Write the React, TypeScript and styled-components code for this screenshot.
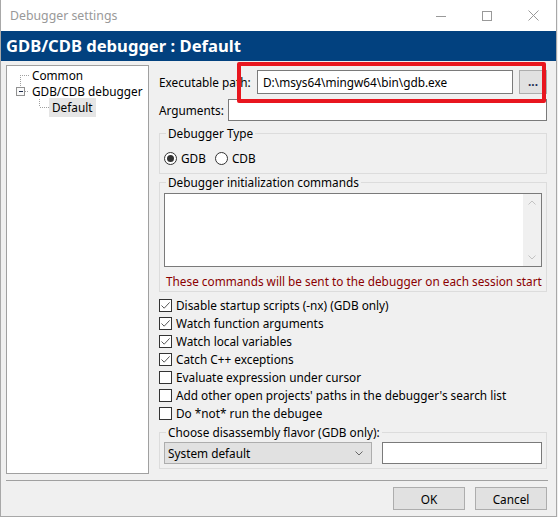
import React from "react";
import styled, { createGlobalStyle } from "styled-components";

const GlobalStyle = createGlobalStyle`
  html, body { margin: 0; padding: 0; background: #f0f0f0; }
  body {
    font-family: "Noto Sans", "Segoe UI", sans-serif;
    font-size: 11.8px;
    color: #000;
  }
  * { box-sizing: border-box; }
`;

const Window = styled.div`
  width: 557px;
  height: 517px;
  display: flex;
  flex-direction: column;
  background: #f0f0f0;
  border-left: 1px solid #a8a8a8;
  border-right: 1px solid #a8a8a8;
  border-bottom: 1px solid #a8a8a8;
  overflow: hidden;
`;

const TitleBar = styled.div`
  height: 31px;
  flex-shrink: 0;
  display: flex;
  align-items: center;
  background: #fff;
  padding-left: 9px;
`;

const TitleText = styled.div`
  flex: 1;
  font-size: 12.3px;
  color: #999;
`;

const CaptionButton = styled.div`
  width: 46px;
  height: 31px;
  display: flex;
  align-items: center;
  justify-content: center;
`;

const Banner = styled.div`
  height: 30px;
  flex-shrink: 0;
  background: #02417f;
  color: #fff;
  font-weight: 700;
  font-size: 16.6px;
  line-height: 30px;
  padding-left: 5px;
  white-space: nowrap;
`;

const Body = styled.div`
  display: flex;
  gap: 10px;
  padding: 4px 9px 0 5px;
`;

const TreePanel = styled.div`
  width: 143px;
  height: 409px;
  flex-shrink: 0;
  background: #fff;
  border: 1px solid #a0a0a0;
  padding-top: 1px;
`;

const TreeRow = styled.div`
  height: 16px;
  display: flex;
  align-items: center;
`;

const TreeGutter = styled.svg`
  flex-shrink: 0;
  display: block;
`;

const TreeLabel = styled.span<{ $selected?: boolean }>`
  padding: 2px 3px;
  margin: -2px 0;
  line-height: 15px;
  white-space: nowrap;
  background: ${(p) => (p.$selected ? "#e5e5e5" : "transparent")};
`;

const RightPane = styled.div`
  position: relative;
  flex: 1;
  min-width: 0;
  display: flex;
  flex-direction: column;
  padding-top: 5px;
`;

const FormRow = styled.div<{ $h: number; $mt?: number }>`
  display: flex;
  align-items: center;
  height: ${(p) => p.$h}px;
  margin-top: ${(p) => p.$mt ?? 0}px;
`;

const FieldLabel = styled.label<{ $w: number }>`
  width: ${(p) => p.$w}px;
  flex-shrink: 0;
  white-space: nowrap;
`;

const TextInput = styled.div`
  flex: 1;
  align-self: stretch;
  background: #fff;
  border: 1px solid #7a7a7a;
  padding: 0 5px;
  display: flex;
  align-items: center;
  white-space: nowrap;
  overflow: hidden;
`;

const BrowseButton = styled.div`
  width: 28px;
  align-self: stretch;
  margin-left: 6px;
  background: #e1e1e1;
  border: 1px solid #adadad;
  display: flex;
  align-items: center;
  justify-content: center;
  color: #1a2a50;
  font-weight: 700;
  padding-bottom: 2px;
`;

const Highlight = styled.div`
  position: absolute;
  left: 78px;
  top: -3px;
  width: 309px;
  height: 41px;
  border: 4.5px solid #e8161f;
  border-radius: 2px;
  pointer-events: none;
`;

const GroupBox = styled.fieldset<{ $mt?: number; $pb: number }>`
  margin: ${(p) => p.$mt ?? 0}px 0 0 0;
  padding: 0 4px ${(p) => p.$pb}px 4px;
  border: 1px solid #dcdcdc;
  min-width: 0;
`;

const GroupTitle = styled.legend`
  margin-left: 2px;
  padding: 0 2px;
  line-height: 16px;
  white-space: nowrap;
`;

const RadioRow = styled.div`
  display: flex;
  align-items: center;
  height: 14px;
  margin-top: 10px;
`;

const RadioOption = styled.label`
  display: flex;
  align-items: center;
  gap: 4px;
  margin-right: 9px;
`;

const RadioCircle = styled.span<{ $checked?: boolean }>`
  width: 13px;
  height: 13px;
  border-radius: 50%;
  border: 1px solid #333;
  background: #fff;
  display: flex;
  align-items: center;
  justify-content: center;
  &::after {
    content: "";
    width: 7px;
    height: 7px;
    border-radius: 50%;
    background: ${(p) => (p.$checked ? "#333" : "transparent")};
  }
`;

const Editor = styled.div`
  margin-top: 3px;
  height: 74px;
  background: #fff;
  border: 1px solid #7a7a7a;
  display: flex;
`;

const EditorArea = styled.div`
  flex: 1;
`;

const ScrollBar = styled.div`
  width: 18px;
  background: #f0f0f0;
  display: flex;
  flex-direction: column;
  justify-content: space-between;
`;

const ScrollArrow = styled.div`
  height: 17px;
  display: flex;
  align-items: center;
  justify-content: center;
`;

const Note = styled.div`
  margin-top: 6px;
  line-height: 16px;
  color: #8b0000;
  white-space: nowrap;
  padding-left: 2px;
`;

const CheckList = styled.div`
  margin-top: 4px;
  display: flex;
  flex-direction: column;
`;

const CheckRow = styled.label`
  height: 18px;
  display: flex;
  align-items: center;
  gap: 4px;
  white-space: nowrap;
`;

const CheckBox = styled.span`
  width: 13px;
  height: 13px;
  flex-shrink: 0;
  border: 1px solid #333;
  background: #fff;
  display: flex;
  align-items: center;
  justify-content: center;
`;

const FlavorRow = styled.div`
  display: flex;
  gap: 10px;
  height: 22px;
  margin-top: 2px;
`;

const Select = styled.div`
  width: 208px;
  background: #e1e1e1;
  border: 1px solid #adadad;
  display: flex;
  align-items: center;
  justify-content: space-between;
  padding: 0 8px 0 3px;
`;

const Separator = styled.div`
  margin: 6px 8px 0 5px;
  border-top: 1px solid #a0a0a0;
`;

const ButtonRow = styled.div`
  display: flex;
  justify-content: flex-end;
  gap: 10px;
  padding: 6px 9px 0 0;
`;

const DialogButton = styled.div`
  width: 72px;
  height: 23px;
  background: #e1e1e1;
  border: 1px solid #adadad;
  display: flex;
  align-items: center;
  justify-content: center;
`;

const Dotted = ({ d }: { d: string }) => (
  <path d={d} stroke="#a0a0a0" strokeWidth={1} strokeDasharray="1 1" fill="none" shapeRendering="crispEdges" />
);

const Chevron = ({ up, color }: { up?: boolean; color: string }) => (
  <svg width="8" height="5" viewBox="0 0 8 5">
    <path d={up ? "M0.5 4.5 L4 1 L7.5 4.5" : "M0.5 0.5 L4 4 L7.5 0.5"} stroke={color} strokeWidth="1" fill="none" />
  </svg>
);

const checks: [string, boolean][] = [
  ["Disable startup scripts (-nx) (GDB only)", true],
  ["Watch function arguments", true],
  ["Watch local variables", true],
  ["Catch C++ exceptions", true],
  ["Evaluate expression under cursor", false],
  ["Add other open projects' paths in the debugger's search list", false],
  ["Do *not* run the debugee", false],
];

export default function App() {
  return (
    <>
      <GlobalStyle />
      <Window>
        <TitleBar>
          <TitleText>Debugger settings</TitleText>
          <CaptionButton>
            <svg width="10" height="10" viewBox="0 0 10 10">
              <path d="M0 5.5 H10" stroke="#999" strokeWidth="1" />
            </svg>
          </CaptionButton>
          <CaptionButton>
            <svg width="10" height="10" viewBox="0 0 10 10">
              <rect x="0.5" y="0.5" width="9" height="9" stroke="#999" fill="none" />
            </svg>
          </CaptionButton>
          <CaptionButton>
            <svg width="11" height="11" viewBox="0 0 11 11">
              <path d="M0.5 0.5 L10.5 10.5 M10.5 0.5 L0.5 10.5" stroke="#999" strokeWidth="1" />
            </svg>
          </CaptionButton>
        </TitleBar>
        <Banner>GDB/CDB debugger : Default</Banner>
        <Body>
          <TreePanel>
            <TreeRow>
              <TreeGutter width="22" height="16" viewBox="0 0 22 16">
                <Dotted d="M13.5 8 V16 M13 8.5 H22" />
              </TreeGutter>
              <TreeLabel>Common</TreeLabel>
            </TreeRow>
            <TreeRow>
              <TreeGutter width="22" height="16" viewBox="0 0 22 16">
                <Dotted d="M13.5 0 V4 M18 8.5 H22" />
                <rect x="9.5" y="4.5" width="8" height="8" fill="#fafafa" stroke="#919191" shapeRendering="crispEdges" />
                <path d="M11.5 8.5 H15.5" stroke="#1c2a4a" shapeRendering="crispEdges" />
              </TreeGutter>
              <TreeLabel>GDB/CDB debugger</TreeLabel>
            </TreeRow>
            <TreeRow>
              <TreeGutter width="42" height="16" viewBox="0 0 42 16">
                <Dotted d="M32.5 0 V8 M33 8.5 H42" />
              </TreeGutter>
              <TreeLabel $selected>Default</TreeLabel>
            </TreeRow>
          </TreePanel>
          <RightPane>
            <FormRow $h={24}>
              <FieldLabel $w={98}>Executable path:</FieldLabel>
              <TextInput>D:\msys64\mingw64\bin\gdb.exe</TextInput>
              <BrowseButton>...</BrowseButton>
            </FormRow>
            <FormRow $h={22} $mt={5}>
              <FieldLabel $w={69}>Arguments:</FieldLabel>
              <TextInput />
            </FormRow>
            <GroupBox $mt={4} $pb={8}>
              <GroupTitle>Debugger Type</GroupTitle>
              <RadioRow>
                <RadioOption>
                  <RadioCircle $checked />
                  GDB
                </RadioOption>
                <RadioOption>
                  <RadioCircle />
                  CDB
                </RadioOption>
              </RadioRow>
            </GroupBox>
            <GroupBox $pb={2}>
              <GroupTitle>Debugger initialization commands</GroupTitle>
              <Editor>
                <EditorArea />
                <ScrollBar>
                  <ScrollArrow>
                    <Chevron up color="#c2c2c2" />
                  </ScrollArrow>
                  <ScrollArrow>
                    <Chevron color="#c2c2c2" />
                  </ScrollArrow>
                </ScrollBar>
              </Editor>
              <Note>These commands will be sent to the debugger on each session start</Note>
            </GroupBox>
            <CheckList>
              {checks.map(([label, on]) => (
                <CheckRow key={label}>
                  <CheckBox>
                    {on && (
                      <svg width="11" height="11" viewBox="0 0 11 11">
                        <path d="M1.5 5.5 L4.2 8.2 L9.6 2.4" stroke="#444" strokeWidth="0.9" fill="none" />
                      </svg>
                    )}
                  </CheckBox>
                  {label}
                </CheckRow>
              ))}
            </CheckList>
            <GroupBox $mt={2} $pb={4}>
              <GroupTitle>Choose disassembly flavor (GDB only):</GroupTitle>
              <FlavorRow>
                <Select>
                  <span>System default</span>
                  <Chevron color="#666" />
                </Select>
                <TextInput />
              </FlavorRow>
            </GroupBox>
            <Highlight />
          </RightPane>
        </Body>
        <Separator />
        <ButtonRow>
          <DialogButton>OK</DialogButton>
          <DialogButton>Cancel</DialogButton>
        </ButtonRow>
      </Window>
    </>
  );
}
